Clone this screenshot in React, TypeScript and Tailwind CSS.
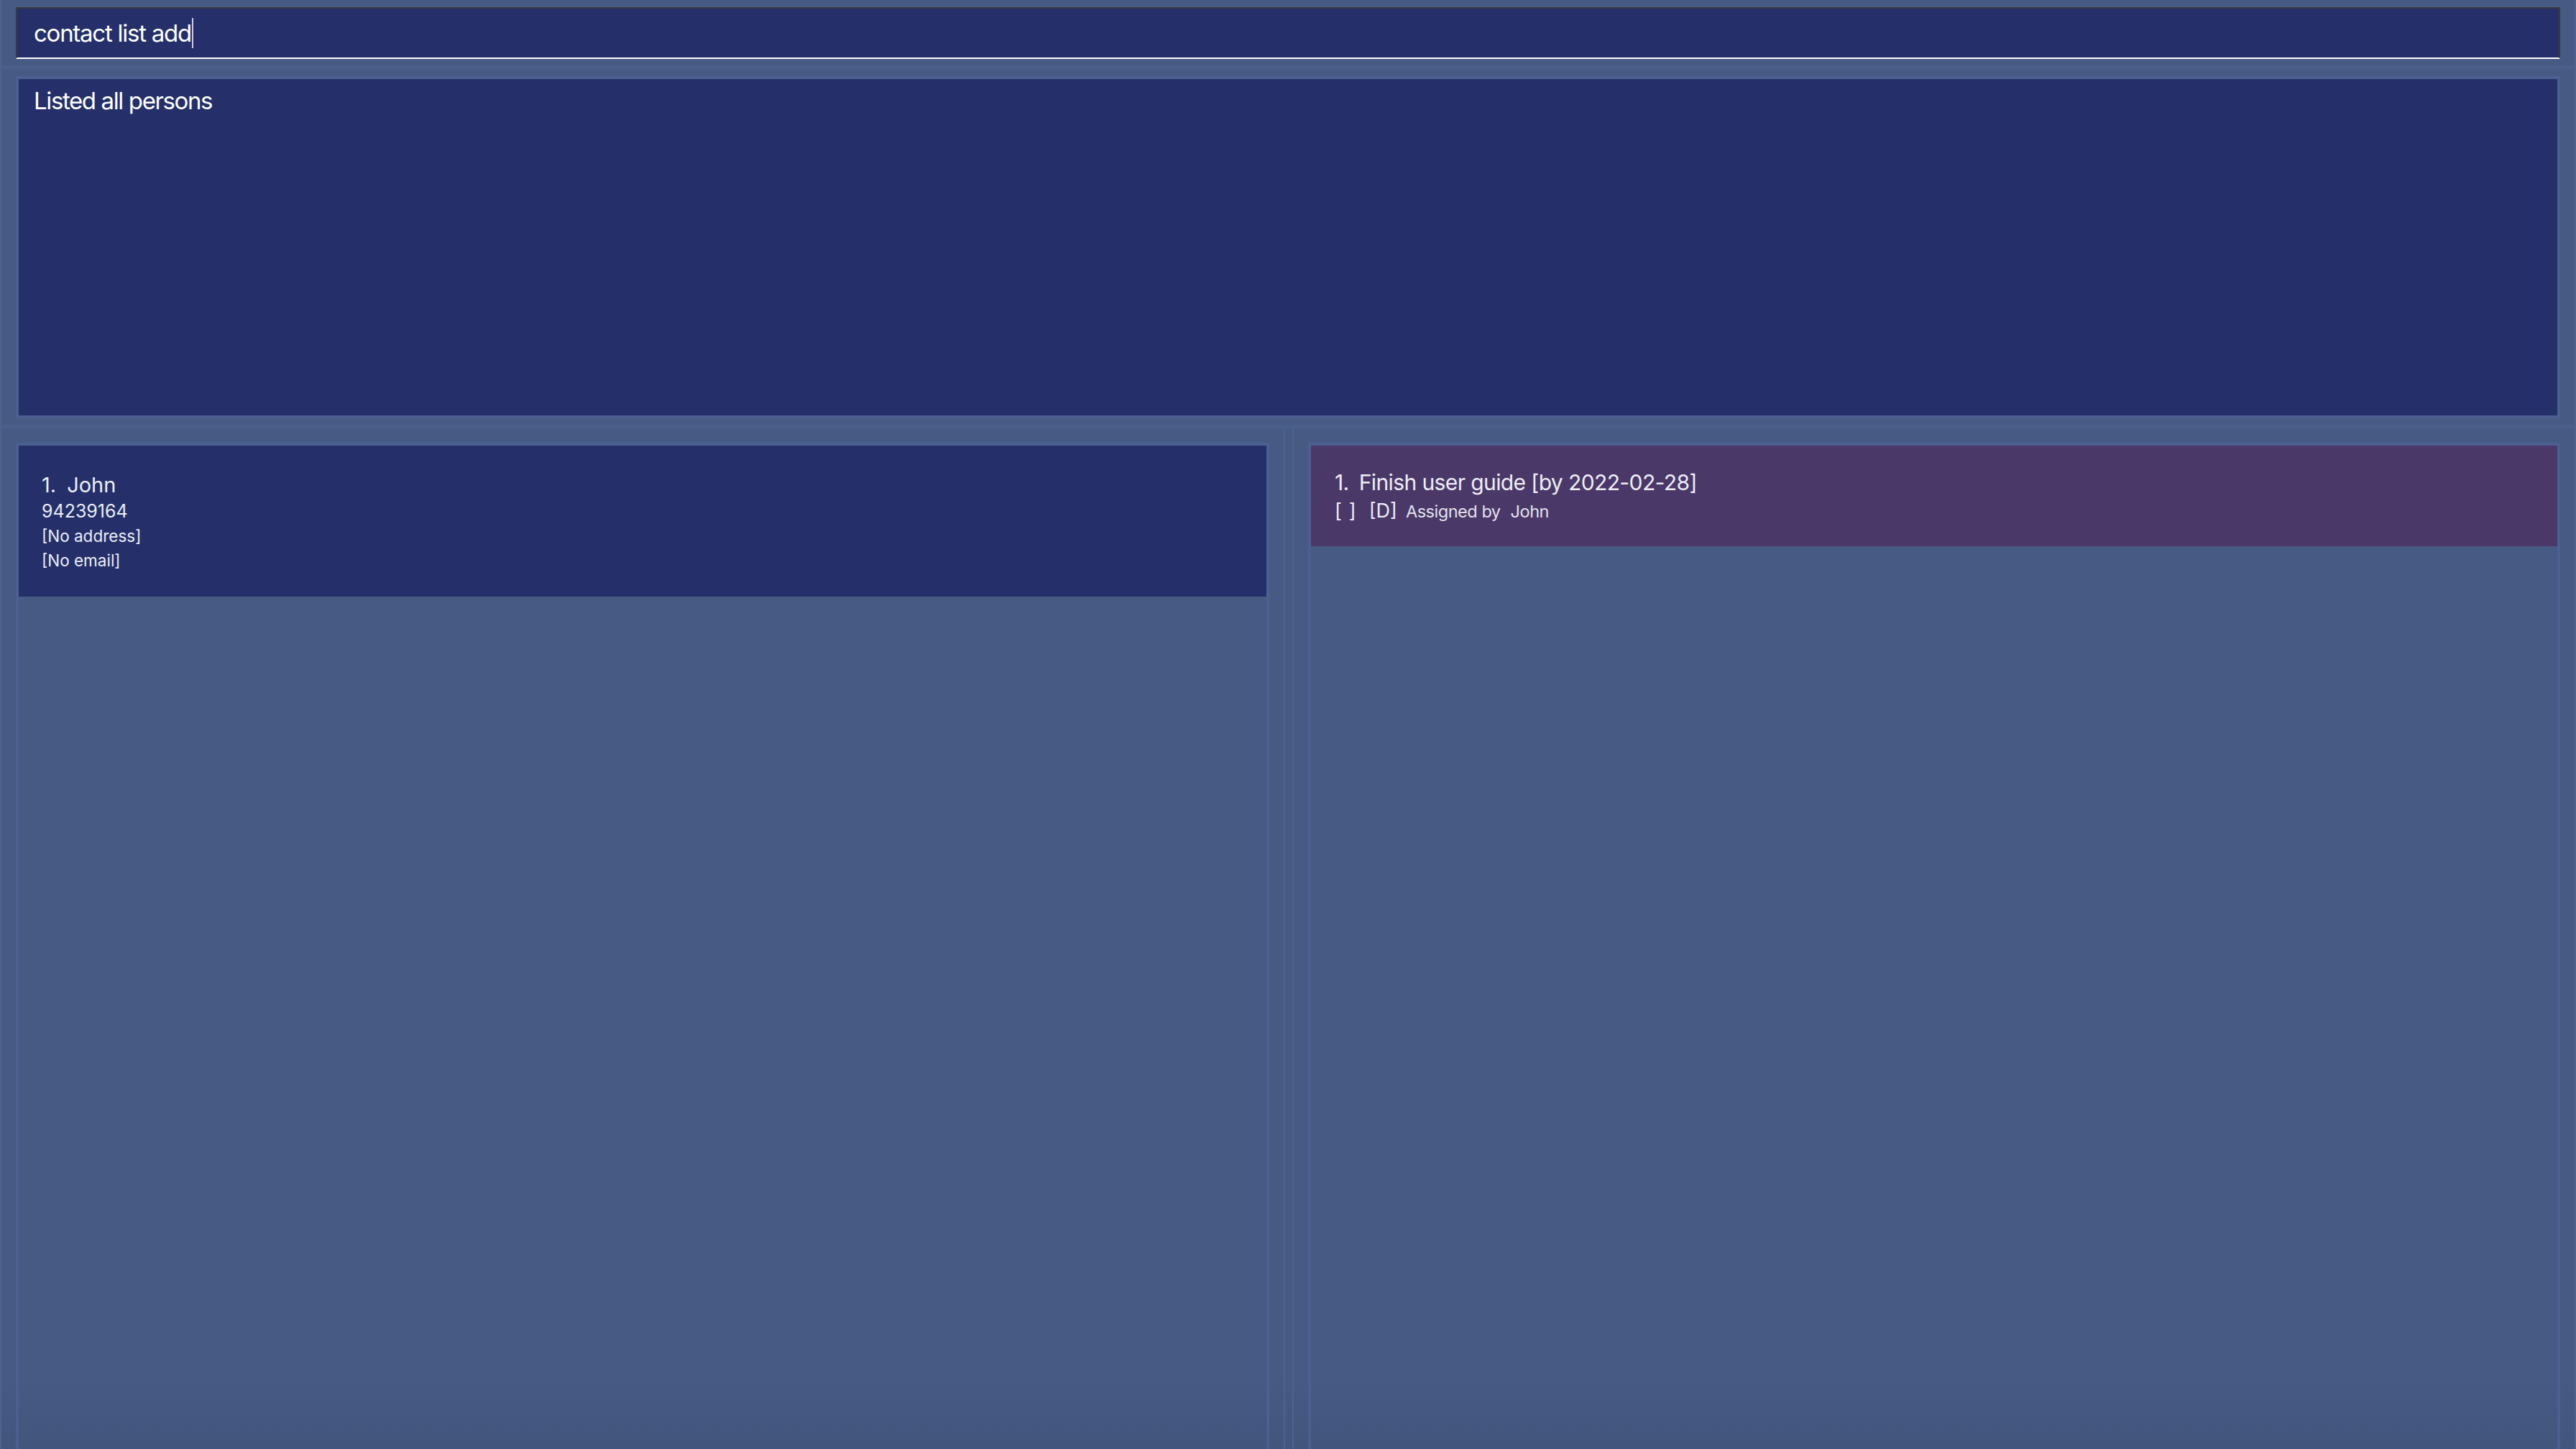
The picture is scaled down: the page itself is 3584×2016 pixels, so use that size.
const font = "font-['Inter','Noto_Sans','Liberation_Sans',sans-serif]";

function CommandBox() {
  return (
    <div className="h-[91px] px-[20px] pt-[10px]">
      <div className="flex h-[72px] items-center border-2 border-[#3b3b3b] border-b-white bg-[#25306b] pl-[23px]">
        <span className="text-[33px] leading-[40px] tracking-[-0.038em] text-white">
          contact list add
        </span>
        <span className="ml-[1px] inline-block h-[42px] w-[2px] bg-[#c9cbd8]" />
      </div>
    </div>
  );
}

function ResultDisplay() {
  return (
    <div className="h-[495px] px-[20px] pt-[10px]">
      <div className="h-[476px] border-4 border-[#4b6090] bg-[#25306b] px-[21px] pt-[10px]">
        <p className="text-[33px] leading-[40px] tracking-[-0.042em] text-white">
          Listed all persons
        </p>
      </div>
    </div>
  );
}

function PersonCard() {
  return (
    <div className="h-[210px] bg-[#25306b] pl-[32px] pt-[38px] text-[#eceef5]">
      <div className="flex h-[34px] items-baseline text-[29px] leading-[34px]">
        <span>1.</span>
        <span className="ml-[15px]">John</span>
      </div>
      <p className="h-[34px] text-[25px] leading-[38px]">94239164</p>
      <p className="h-[34px] text-[22.5px] leading-[40px]">[No address]</p>
      <p className="h-[34px] text-[22.5px] leading-[40px]">[No email]</p>
    </div>
  );
}

function TaskCard() {
  return (
    <div className="h-[140px] bg-[#4a3868] pl-[33px] pt-[33px] text-[#eceef5]">
      <div className="flex h-[36px] items-baseline text-[30px] leading-[36px] tracking-[-0.02em]">
        <span>1.</span>
        <span className="ml-[14px]">Finish user guide [by 2022-02-28]</span>
      </div>
      <div className="flex h-[38px] items-baseline leading-[44px]">
        <span className="text-[27px]">[</span>
        <span className="ml-[10px] text-[27px]">]</span>
        <span className="ml-[18px] text-[27px]">[D]</span>
        <span className="ml-[12px] text-[23.5px] tracking-[-0.02em] text-[#e2e3ec]">
          Assigned by
        </span>
        <span className="ml-[14px] text-[23.5px] tracking-[-0.02em] text-[#e2e3ec]">
          John
        </span>
      </div>
    </div>
  );
}

function ListPanel({ children }: { children: React.ReactNode }) {
  return (
    <div className="flex-1 border-x-4 border-t-4 border-[#4b6090]">{children}</div>
  );
}

export default function App() {
  return (
    <div
      className={`flex h-[2016px] w-[3584px] flex-col overflow-hidden border-x-2 border-[#4e628e] bg-[linear-gradient(to_bottom,#465a84_95%,#42557d_100%)] ${font}`}
    >
      <CommandBox />
      <div className="h-[5px] bg-[#4b5f8b]" />
      <ResultDisplay />
      <div className="h-[5px] bg-[#4b5f8b]" />
      <div className="flex flex-1">
        <div className="flex w-[1784px] flex-col px-[20px] pt-[20px]">
          <ListPanel>
            <PersonCard />
          </ListPanel>
        </div>
        <div className="w-[14px] border-x-2 border-[#4e628e]" />
        <div className="flex flex-1 flex-col px-[20px] pt-[20px]">
          <ListPanel>
            <TaskCard />
          </ListPanel>
        </div>
      </div>
    </div>
  );
}
